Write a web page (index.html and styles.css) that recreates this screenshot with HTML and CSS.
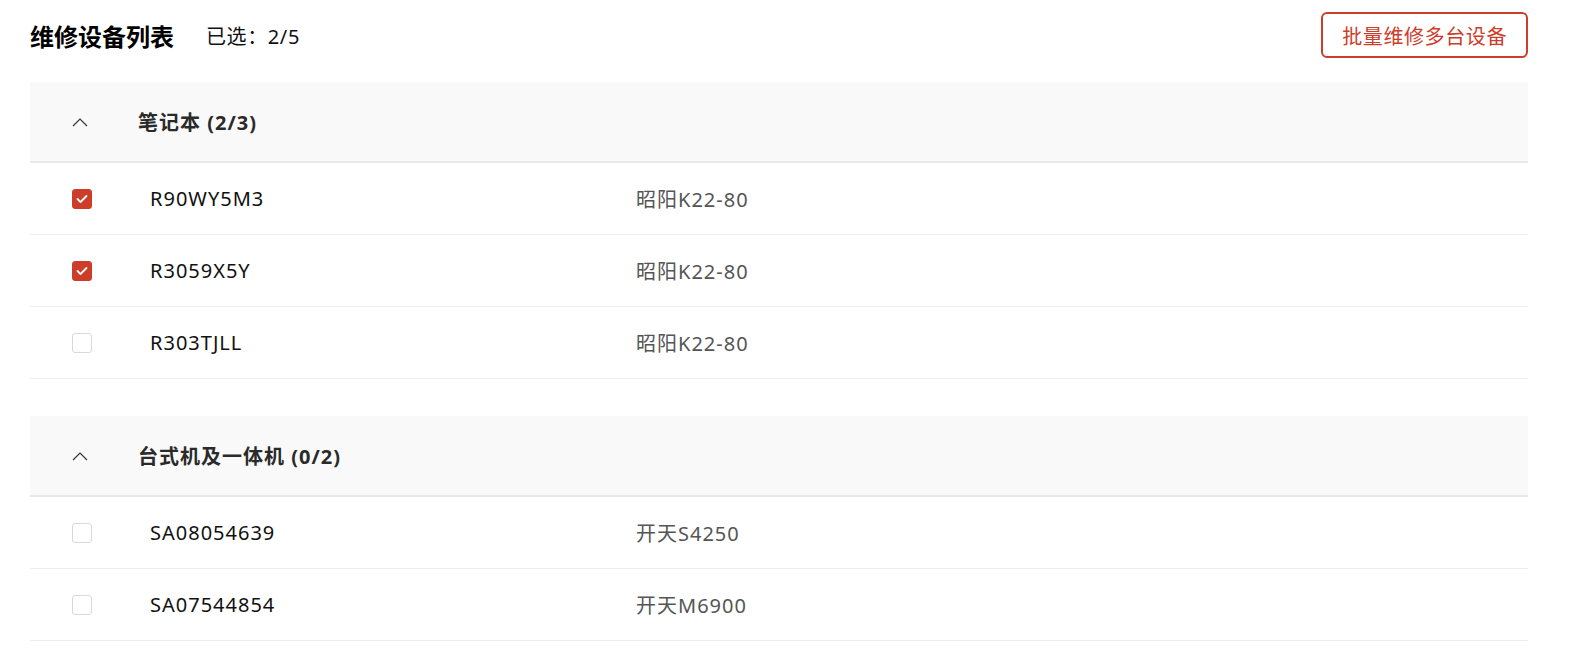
FILE: index.html
```html
<!DOCTYPE html>
<html lang="zh-CN">
<head>
<meta charset="utf-8">
<link rel="stylesheet" href="styles.css">
</head>
<body>
<div class="page">
  <div class="header">
    <div class="title">维修设备列表</div>
    <div class="selected">已选：2/5</div>
    <button class="batch-btn">批量维修多台设备</button>
  </div>

  <div class="group">
    <div class="group-head">
      <span class="chev"><svg width="16" height="10" viewBox="0 0 16 10"><path d="M1 9 L8 2 L15 9" fill="none" stroke="#333" stroke-width="1.2"/></svg></span>
      <span class="group-title">笔记本 (2/3)</span>
    </div>
    <div class="row">
      <span class="cell-check"><span class="cb checked"><svg width="12" height="10" viewBox="0 0 12 10"><path d="M1.5 5 L4.5 8 L10.5 2" fill="none" stroke="#fff" stroke-width="1.8" stroke-linecap="round" stroke-linejoin="round"/></svg></span></span>
      <span class="sn">R90WY5M3</span>
      <span class="model">昭阳K22-80</span>
    </div>
    <div class="row">
      <span class="cell-check"><span class="cb checked"><svg width="12" height="10" viewBox="0 0 12 10"><path d="M1.5 5 L4.5 8 L10.5 2" fill="none" stroke="#fff" stroke-width="1.8" stroke-linecap="round" stroke-linejoin="round"/></svg></span></span>
      <span class="sn">R3059X5Y</span>
      <span class="model">昭阳K22-80</span>
    </div>
    <div class="row">
      <span class="cell-check"><span class="cb"></span></span>
      <span class="sn">R303TJLL</span>
      <span class="model">昭阳K22-80</span>
    </div>
  </div>

  <div class="group">
    <div class="group-head">
      <span class="chev"><svg width="16" height="10" viewBox="0 0 16 10"><path d="M1 9 L8 2 L15 9" fill="none" stroke="#333" stroke-width="1.2"/></svg></span>
      <span class="group-title">台式机及一体机 (0/2)</span>
    </div>
    <div class="row">
      <span class="cell-check"><span class="cb"></span></span>
      <span class="sn">SA08054639</span>
      <span class="model">开天S4250</span>
    </div>
    <div class="row">
      <span class="cell-check"><span class="cb"></span></span>
      <span class="sn">SA07544854</span>
      <span class="model">开天M6900</span>
    </div>
  </div>
</div>
</body>
</html>
```

FILE: styles.css
```css
* { box-sizing: border-box; }
body {
  margin: 0;
  background: #fff;
  font-family: "Noto Sans", "Noto Sans CJK SC", sans-serif;
  color: #1a1a1a;
}
.page {
  padding: 0 42px 0 30px;
}
.header {
  display: flex;
  align-items: center;
  padding: 12px 0 24px;
}
.title {
  font-size: 24px;
  font-weight: 700;
  color: #000;
}
.selected {
  margin-left: 32px;
  font-size: 20px;
  letter-spacing: 0.6px;
  color: #111;
}
.batch-btn {
  margin-left: auto;
  height: 46px;
  padding: 0 19px;
  background: #fff;
  border: 2px solid #cc3d2a;
  border-radius: 6px;
  color: #cc3d2a;
  font-family: "Noto Sans CJK SC", sans-serif;
  font-size: 20px;
  letter-spacing: 0.6px;
}
.group + .group {
  margin-top: 37px;
}
.group-head {
  display: flex;
  align-items: center;
  height: 81px;
  background: #f9f9f9;
  border-bottom: 2px solid #e8e8e8;
  padding-left: 42px;
}
.chev {
  display: flex;
  width: 66px;
}
.group-title {
  font-size: 20px;
  font-weight: 700;
  letter-spacing: 1px;
  color: #2a2a2a;
}
.row {
  display: grid;
  grid-template-columns: 120px 486px 1fr;
  align-items: center;
  height: 72px;
  border-bottom: 1px solid #eceef2;
  font-size: 20px;
  letter-spacing: 1px;
}
.cell-check {
  padding-left: 42px;
  display: flex;
}
.cb {
  width: 20px;
  height: 20px;
  border: 1px solid #d9d9d9;
  border-radius: 3px;
  background: #fff;
  display: flex;
  align-items: center;
  justify-content: center;
}
.cb.checked {
  background: #cc3d2a;
  border-color: #cc3d2a;
}
.sn {
  color: #111;
}
.model {
  color: #555;
}
```
